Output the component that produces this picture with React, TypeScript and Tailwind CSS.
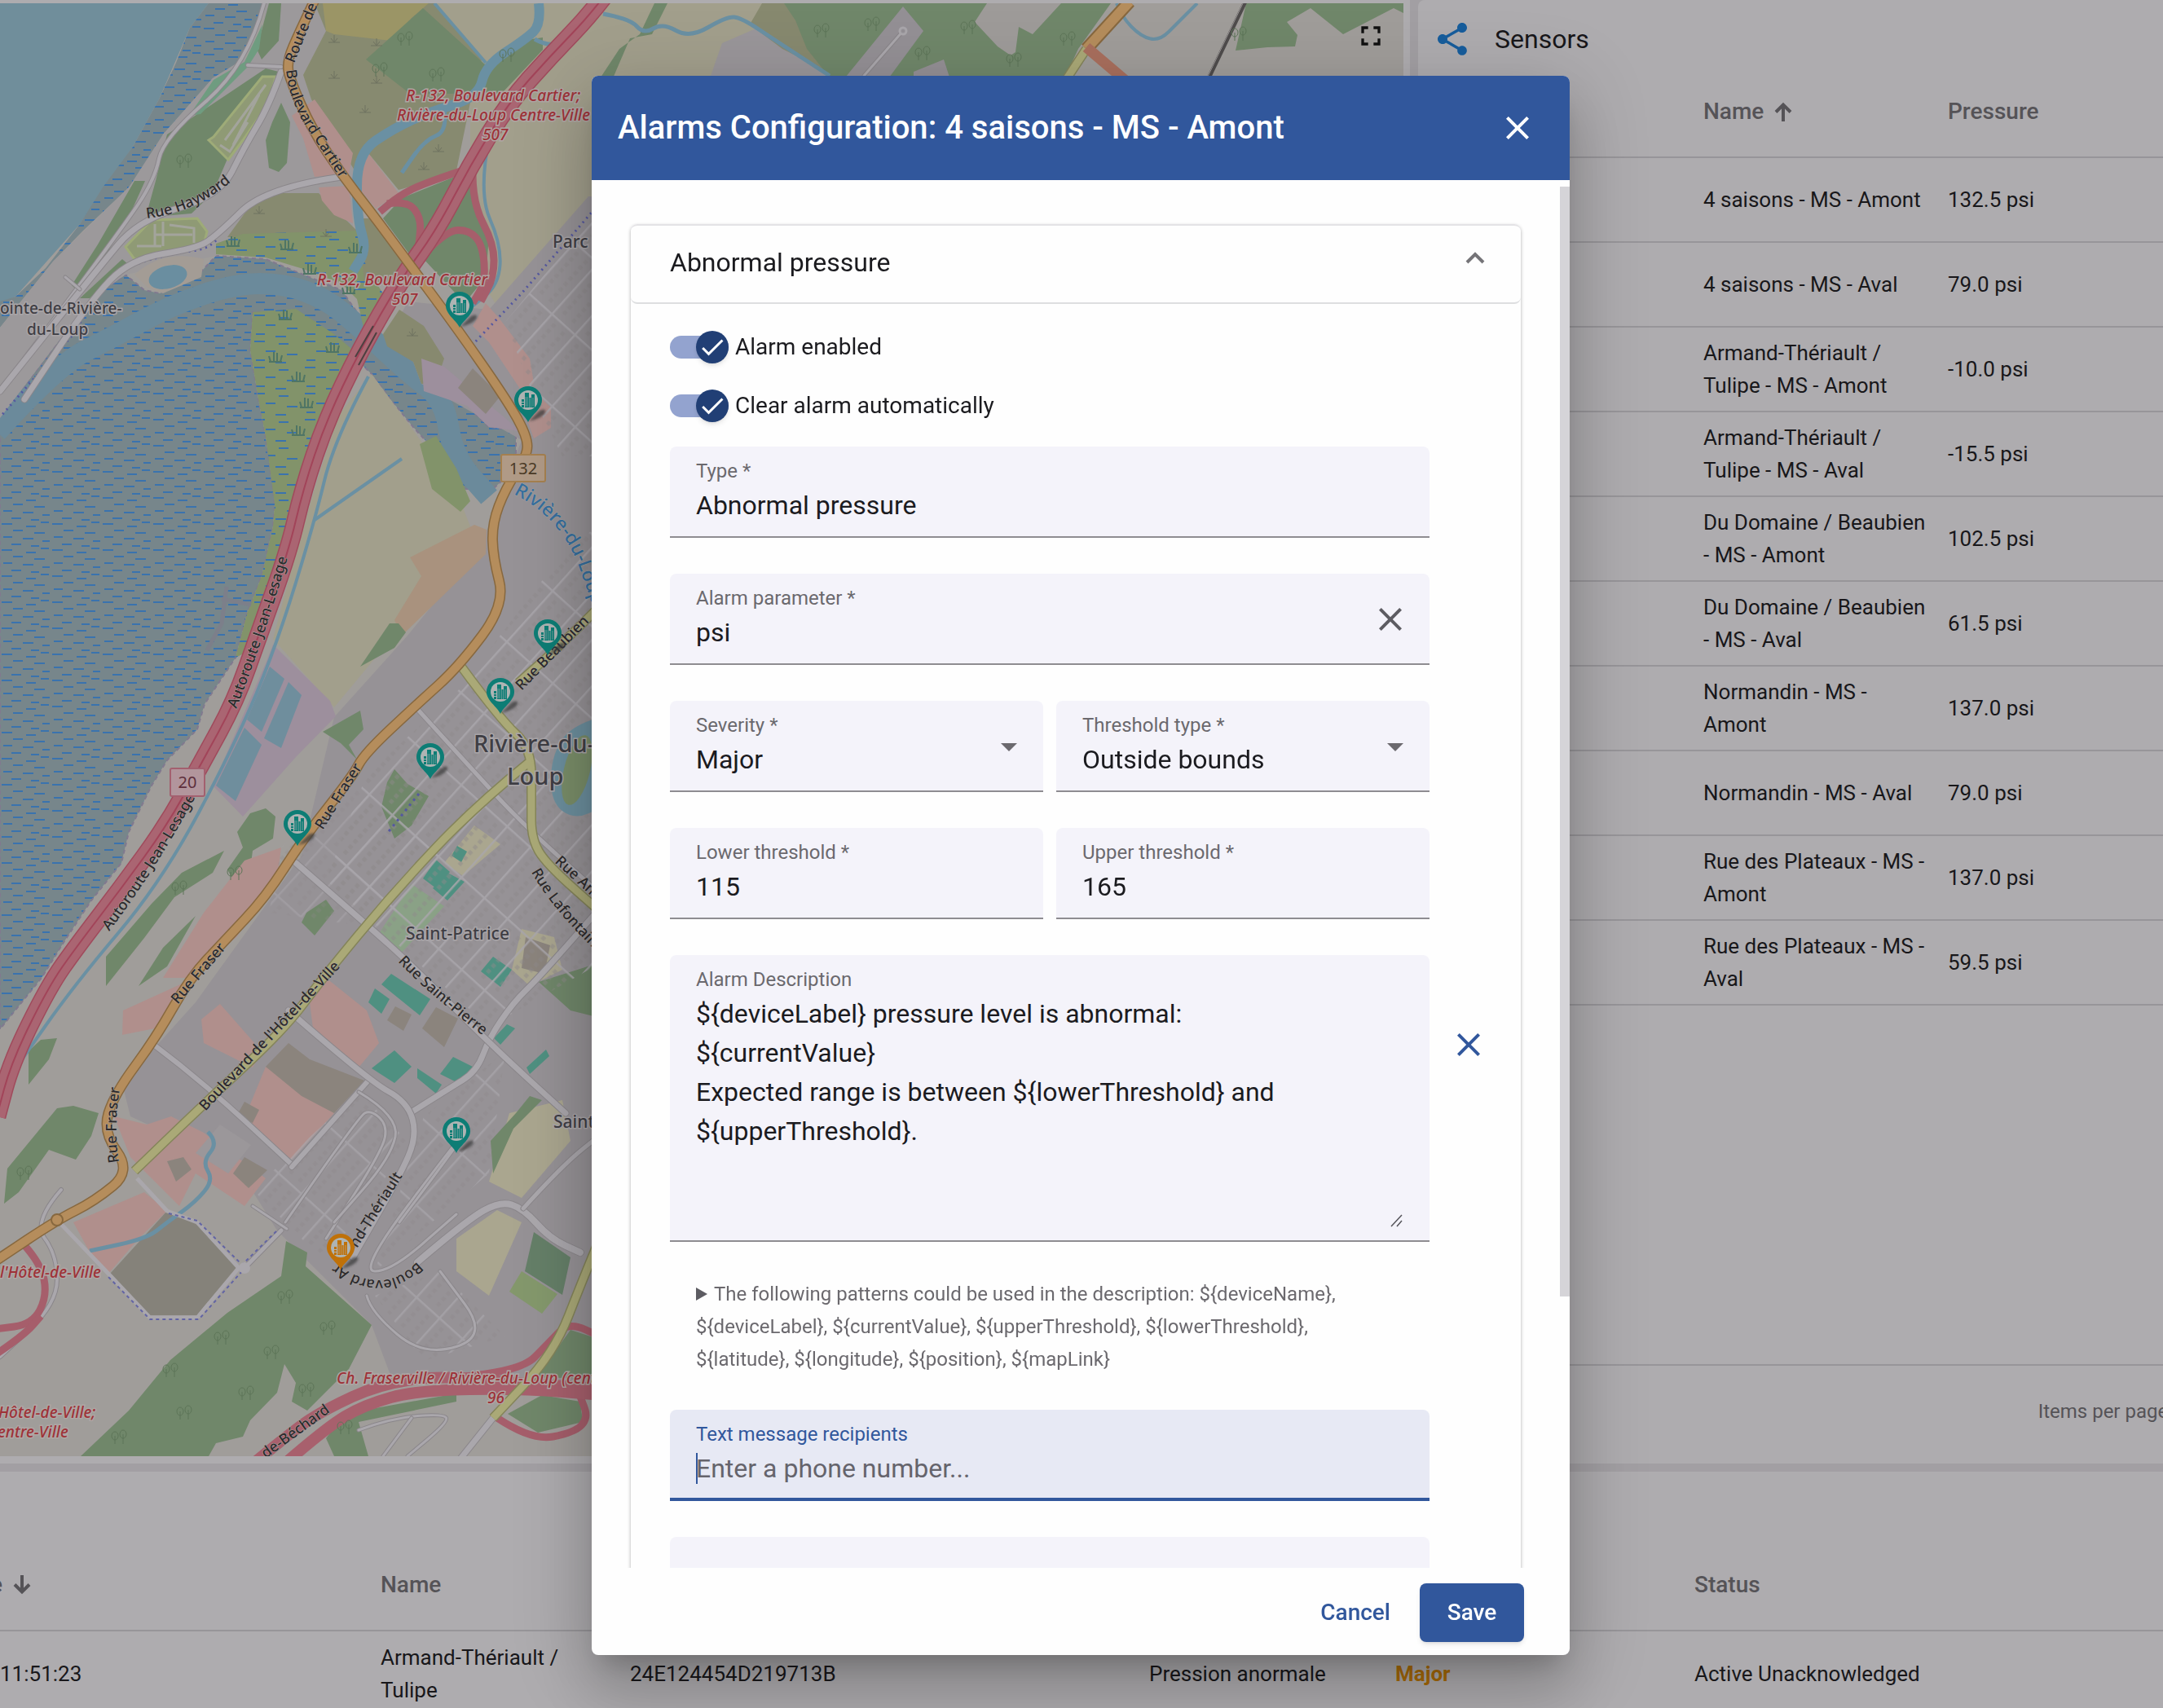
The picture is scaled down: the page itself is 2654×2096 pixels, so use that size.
import React from "react";

type Pt = [number, number];

const poly = (pts: Pt[]) => pts.map((p) => p.join(",")).join(" ");

/* Smooth polyline through the midpoints of its segments. */
function curve(pts: Pt[]): string {
  let d = `M${pts[0][0]} ${pts[0][1]}`;
  for (let i = 1; i < pts.length - 1; i++) {
    const mx = (pts[i][0] + pts[i + 1][0]) / 2;
    const my = (pts[i][1] + pts[i + 1][1]) / 2;
    d += ` Q${pts[i][0]} ${pts[i][1]} ${mx} ${my}`;
  }
  const last = pts[pts.length - 1];
  return d + ` L${last[0]} ${last[1]}`;
}

const FOREST = "#70876a";
const COMMERCIAL = "#b08f8c";
const BUILDING = "#8b847d";
const FARM = "#a29f8c";

const flatsNorth: Pt[] = [[256, 4], [233, 34], [216, 77], [195, 122], [163, 180], [126, 230], [98, 275], [56, 329], [19, 364], [0, 370], [0, 402], [28, 367], [65, 321], [102, 283], [158, 230], [186, 199], [200, 165], [261, 96], [298, 73], [307, 50], [326, 4]];
const bay: Pt[] = [[0, 513], [70, 421], [93, 383], [121, 360], [154, 337], [177, 356], [196, 360], [233, 344], [247, 333], [265, 314], [326, 318], [372, 337], [419, 356], [438, 383], [447, 406], [475, 425], [507, 444], [517, 471], [540, 482], [573, 498], [600, 524], [633, 528], [633, 574], [605, 600], [559, 600], [535, 555], [507, 524], [479, 490], [456, 459], [428, 432], [386, 402], [335, 383], [310, 383], [307, 429], [317, 490], [326, 536], [335, 600], [337, 619], [335, 646], [321, 707], [303, 753], [289, 807], [251, 864], [242, 895], [205, 933], [186, 964], [158, 1021], [149, 1059], [112, 1105], [79, 1155], [51, 1200], [0, 1263]];

const areas: { fill: string; pts: Pt[] }[] = [
  { fill: "#a29f8c", pts: [[520, 4], [960, 4], [972, 53], [1031, 93], [1031, 241], [722, 241], [619, 390], [600, 360], [577, 237], [577, 126], [591, 73]] },
  { fill: "#969296", pts: [[722, 241], [1000, 241], [1000, 1700], [480, 1690], [456, 1626], [340, 1510], [290, 1430], [160, 1370], [150, 1330], [240, 1230], [370, 1050], [410, 880], [500, 780], [590, 670], [640, 540], [517, 471], [507, 444], [475, 420], [500, 370], [600, 380]] },
  { fill: "#9c999b", pts: [[200, 165], [261, 96], [320, 60], [326, 4], [386, 4], [400, 38], [372, 92], [382, 122], [433, 200], [433, 283], [326, 245], [265, 314], [154, 337], [121, 360], [70, 421], [0, 513], [0, 402], [65, 321], [158, 230]] },
  { fill: "#878a70", pts: [[386, 4], [535, 4], [591, 73], [577, 126], [559, 214], [489, 233], [452, 188], [438, 214], [382, 122], [372, 92], [400, 38]] },
  { fill: "#9b9566", pts: [[396, 4], [526, 4], [505, 22], [480, 50], [410, 42], [400, 38]] },
  { fill: "#878a70", pts: [[326, 237], [391, 237], [438, 283], [400, 298], [279, 291], [300, 262]] },
  { fill: "#82936a", pts: [[265, 299], [298, 287], [438, 283], [450, 330], [470, 360], [447, 406], [438, 367], [419, 348], [372, 330], [326, 316], [265, 312]] },
  { fill: "#82936a", pts: [[310, 383], [363, 379], [410, 410], [436, 432], [428, 448], [372, 574], [361, 640], [340, 720], [303, 800], [289, 807], [303, 753], [321, 707], [335, 646], [337, 619], [326, 536], [317, 490], [307, 429]] },
  { fill: "#87896f", pts: [[490, 380], [520, 400], [545, 440], [535, 470], [517, 471], [507, 444], [475, 425], [470, 410]] },
  { fill: "#87896f", pts: [[438, 268], [461, 268], [520, 350], [500, 350], [447, 344]] },
  { fill: FOREST, pts: [[519, 10], [596, 80], [587, 115], [503, 115], [449, 73]] },
  { fill: FOREST, pts: [[600, 77], [652, 48], [666, 46], [666, 61], [619, 111], [587, 126]] },
  { fill: FOREST, pts: [[493, 243], [560, 216], [535, 283], [512, 325], [470, 268]] },
  { fill: FOREST, pts: [[577, 222], [600, 290], [596, 340], [570, 372], [520, 318], [545, 280]] },
  { fill: FOREST, pts: [[330, 4], [345, 4], [342, 50], [321, 73], [315, 60]] },
  { fill: FOREST, pts: [[326, 84], [342, 88], [340, 111], [298, 161], [279, 195], [261, 237], [235, 262], [200, 265], [180, 262], [191, 222], [200, 184], [205, 165]] },
  { fill: FOREST, pts: [[345, 126], [356, 150], [352, 200], [342, 211], [330, 206], [326, 172], [334, 150]] },
  { fill: FOREST, pts: [[165, 222], [178, 222], [160, 262], [120, 330], [96, 358], [88, 350], [120, 300]] },
  { fill: FOREST, pts: [[150, 318], [158, 325], [110, 366], [98, 366]] },
  { fill: "#6f9c80", pts: [[322, 30], [318, 60], [304, 82], [246, 140], [232, 142], [262, 98], [300, 76]] },
  { fill: COMMERCIAL, pts: [[358, 142], [386, 122], [433, 188], [428, 214], [386, 217], [372, 170]] },
  { fill: COMMERCIAL, pts: [[452, 188], [489, 237], [461, 256], [440, 230], [440, 205]] },
  { fill: COMMERCIAL, pts: [[391, 230], [428, 228], [433, 274], [410, 264], [395, 246]] },
  { fill: COMMERCIAL, pts: [[596, 372], [612, 390], [650, 440], [655, 470], [640, 480], [600, 420], [580, 400]] },
  { fill: COMMERCIAL, pts: [[655, 480], [676, 500], [676, 525], [655, 538], [645, 510]] },
  { fill: FARM, pts: [[456, 459], [507, 528], [559, 600], [577, 646], [521, 703], [489, 772], [450, 820], [410, 868], [335, 784], [360, 690], [386, 600], [415, 510]] },
  { fill: "#82936a", pts: [[535, 535], [560, 575], [577, 615], [565, 628], [530, 600], [515, 545]] },
  { fill: "#a9927e", pts: [[582, 644], [597, 650], [596, 680], [493, 780], [484, 761], [517, 707], [503, 684]] },
  { fill: "#9d8f9d", pts: [[335, 791], [405, 860], [412, 879], [363, 929], [298, 1002], [261, 964], [326, 814]] },
  { fill: "#9d8f9d", pts: [[517, 440], [545, 450], [640, 530], [630, 528], [600, 524], [573, 498], [520, 480]] },
  { fill: BUILDING, pts: [[580, 452], [614, 486], [596, 508], [562, 476]] },
  { fill: "#6f8e9d", pts: [[331, 818], [349, 833], [321, 898], [303, 883]] },
  { fill: "#6f8e9d", pts: [[354, 837], [370, 853], [345, 918], [324, 906]] },
  { fill: "#6f8e9d", pts: [[300, 893], [321, 914], [289, 983], [265, 964]] },
  { fill: FOREST, pts: [[489, 765], [478, 765], [442, 818], [484, 795], [498, 776]] },
  { fill: FOREST, pts: [[442, 872], [446, 895], [428, 914], [438, 932], [418, 912], [396, 898]] },
  { fill: FOREST, pts: [[326, 992], [338, 1002], [335, 1029], [310, 1044], [307, 1067], [289, 1086], [279, 1067], [298, 1040], [291, 1021], [307, 998]] },
  { fill: FOREST, pts: [[275, 1044], [261, 1071], [214, 1101], [177, 1151], [130, 1210], [130, 1174], [186, 1109], [223, 1071]] },
  { fill: FOREST, pts: [[240, 1124], [205, 1186], [170, 1210], [200, 1163]] },
  { fill: FOREST, pts: [[484, 944], [500, 962], [526, 977], [505, 1013], [484, 1029], [468, 990], [475, 960]] },
  { fill: FOREST, pts: [[376, 1120], [400, 1104], [410, 1118], [386, 1148], [370, 1132]] },
  { fill: "#8aa186", pts: [[505, 1085], [545, 1112], [490, 1172], [462, 1150]] },
  { fill: "#aaa68f", pts: [[582, 1013], [614, 1036], [568, 1075], [545, 1059]] },
  { fill: "#aaa68f", pts: [[640, 1140], [680, 1150], [690, 1190], [650, 1210], [628, 1190]] },
  { fill: BUILDING, pts: [[645, 1150], [675, 1160], [668, 1195], [640, 1188]] },
  { fill: COMMERCIAL, pts: [[300, 1056], [345, 1040], [340, 1080], [290, 1150], [230, 1200], [200, 1200], [250, 1120]] },
  { fill: COMMERCIAL, pts: [[151, 1240], [230, 1204], [200, 1260], [150, 1270]] },
  { fill: COMMERCIAL, pts: [[247, 1251], [270, 1232], [321, 1290], [310, 1310], [250, 1280]] },
  { fill: COMMERCIAL, pts: [[326, 1309], [410, 1366], [358, 1423], [298, 1377]] },
  { fill: COMMERCIAL, pts: [[400, 1200], [450, 1240], [465, 1280], [440, 1310], [385, 1270], [380, 1230]] },
  { fill: COMMERCIAL, pts: [[140, 1370], [180, 1380], [210, 1370], [250, 1390], [326, 1446], [300, 1480], [240, 1440], [220, 1480], [160, 1420]] },
  { fill: COMMERCIAL, pts: [[90, 1500], [177, 1463], [205, 1486], [170, 1520], [133, 1563], [112, 1540]] },
  { fill: BUILDING, pts: [[354, 1280], [380, 1300], [447, 1326], [410, 1366], [370, 1345], [326, 1309]] },
  { fill: BUILDING, pts: [[300, 1352], [318, 1362], [310, 1378], [290, 1370]] },
  { fill: BUILDING, pts: [[205, 1425], [225, 1420], [235, 1435], [216, 1450]] },
  { fill: BUILDING, pts: [[300, 1420], [328, 1436], [305, 1458], [286, 1440]] },
  { fill: "#9b979a", pts: [[270, 1380], [308, 1405], [280, 1440], [240, 1415]] },
  { fill: BUILDING, pts: [[535, 1236], [562, 1250], [545, 1285], [518, 1262]] },
  { fill: BUILDING, pts: [[485, 1235], [505, 1245], [495, 1265], [475, 1252]] },
  { fill: "#aaa68f", pts: [[625, 1366], [690, 1350], [700, 1400], [640, 1470], [600, 1450]] },
  { fill: "#aaa68f", pts: [[560, 1520], [610, 1485], [640, 1500], [600, 1590], [560, 1560]] },
  { fill: FOREST, pts: [[633, 1366], [650, 1345], [665, 1350], [630, 1385], [605, 1440], [602, 1400]] },
  { fill: FOREST, pts: [[661, 1205], [740, 1180], [740, 1250], [700, 1240]] },
  { fill: "#657f68", pts: [[655, 1512], [700, 1543], [690, 1589], [644, 1560]] },
  { fill: "#84986c", pts: [[640, 1560], [684, 1588], [665, 1612], [625, 1585]] },
  { fill: "#85827a", pts: [[205, 1486], [242, 1500], [291, 1554], [242, 1614], [184, 1614], [135, 1563]] },
  { fill: FOREST, pts: [[351, 1523], [377, 1537], [375, 1554], [456, 1626], [428, 1680], [377, 1731], [358, 1720], [363, 1697], [349, 1674], [340, 1709], [307, 1743], [298, 1763], [265, 1771], [256, 1787], [99, 1787], [158, 1731], [209, 1669], [279, 1611], [345, 1566]] },
  { fill: FOREST, pts: [[70, 1360], [90, 1357], [121, 1366], [112, 1394], [93, 1423], [60, 1411], [23, 1463], [5, 1477], [9, 1434]] },
  { fill: FOREST, pts: [[70, 1274], [60, 1300], [35, 1331], [35, 1290], [50, 1276]] },
  { fill: FOREST, pts: [[415, 1745], [450, 1730], [560, 1710], [560, 1720], [440, 1745], [452, 1787], [410, 1787], [400, 1765]] },
  { fill: FOREST, pts: [[623, 1735], [665, 1712], [712, 1720], [715, 1745], [660, 1758]] },
  { fill: FOREST, pts: [[700, 1632], [740, 1645], [740, 1692], [650, 1690], [680, 1660]] },
  { fill: "#4f9081", pts: [[535, 1055], [552, 1070], [535, 1090], [519, 1078]] },
  { fill: "#4f9081", pts: [[549, 1071], [570, 1082], [549, 1105], [531, 1090]] },
  { fill: "#4f9081", pts: [[561, 1038], [573, 1045], [566, 1058], [554, 1050]] },
  { fill: "#4f9081", pts: [[480, 1195], [528, 1226], [515, 1246], [468, 1208]] },
  { fill: "#4f9081", pts: [[460, 1213], [478, 1226], [468, 1244], [452, 1230]] },
  { fill: "#4f9081", pts: [[605, 1174], [628, 1190], [614, 1211], [590, 1192]] },
  { fill: "#4f9081", pts: [[484, 1289], [505, 1309], [484, 1329], [456, 1311]] },
  { fill: "#4f9081", pts: [[512, 1311], [542, 1331], [535, 1342], [512, 1323]] },
  { fill: "#4f9081", pts: [[556, 1297], [580, 1309], [566, 1331], [540, 1318]] },
  { fill: "#4f9081", pts: [[622, 1257], [632, 1262], [614, 1282], [606, 1274]] },
  { fill: "#4f9081", pts: [[670, 1288], [674, 1296], [650, 1318], [646, 1310]] },
  { fill: FOREST, pts: [[959, 4], [1363, 4], [1323, 60], [1300, 110], [1031, 110], [1018, 93], [972, 60]] },
  { fill: "#9a969a", pts: [[932, 33], [1018, 93], [1018, 110], [866, 110], [886, 53]] },
  { fill: "#87896f", pts: [[935, 4], [962, 4], [976, 25], [990, 60], [1010, 85], [960, 60], [920, 30]] },
  { fill: FOREST, pts: [[803, 4], [819, 4], [800, 42], [773, 47], [746, 110], [727, 110], [760, 60], [785, 42]] },
  { fill: "#949095", pts: [[1108, 8], [1133, 38], [1080, 110], [1025, 110]] },
  { fill: "#9e9b99", pts: [[1211, 4], [1302, 4], [1267, 42], [1250, 33], [1246, 64], [1240, 68], [1224, 57], [1196, 27]] },
  { fill: "#949095", pts: [[1121, 88], [1158, 73], [1170, 110], [1121, 110]] },
  { fill: FOREST, pts: [[1529, 4], [1722, 4], [1722, 16], [1710, 10], [1648, 42], [1608, 10], [1579, 27], [1592, 43], [1589, 57], [1555, 58], [1516, 62]] },
];

const streams: { w: number; pts: Pt[] }[] = [
  { w: 12, pts: [[661, 4], [664, 30], [645, 48], [596, 80], [587, 119], [526, 138], [484, 157], [438, 188], [438, 268], [450, 306], [433, 333]] },
  { w: 4, pts: [[533, 4], [596, 77]] },
  { w: 5, pts: [[545, 134], [549, 161], [521, 172], [493, 212]] },
  { w: 5, pts: [[656, 48], [680, 62], [720, 30]] },
  { w: 4, pts: [[600, 170], [587, 237], [615, 300], [612, 350], [577, 378]] },
  { w: 4, pts: [[452, 462], [410, 540], [386, 640], [340, 790], [290, 910], [200, 1080], [90, 1210], [20, 1310]] },
  { w: 4, pts: [[493, 563], [440, 600], [386, 638]] },
  { w: 5, pts: [[255, 1389], [268, 1402], [248, 1426], [262, 1448], [240, 1475], [205, 1500], [180, 1520], [110, 1535]] },
  { w: 5, pts: [[740, 17], [773, 23], [790, 42], [813, 28], [846, 47], [892, 20], [910, 22], [952, 50], [1018, 93]] },
  { w: 4, pts: [[1370, 4], [1376, 20], [1400, 45], [1423, 50], [1445, 28], [1469, 4]] },
];

const minorRoads: { w: number; pts: Pt[] }[] = [
  { w: 7, pts: [[503, 1366], [549, 1337], [585, 1315], [600, 1274], [630, 1230], [661, 1200], [740, 1110]] },
  { w: 6, pts: [[186, 1280], [247, 1326], [358, 1429]] },
  { w: 6, pts: [[358, 1432], [452, 1326]] },
  { w: 7, pts: [[354, 1240], [452, 1326], [500, 1352], [512, 1394], [489, 1446], [433, 1543]] },
  { w: 8, pts: [[512, 1549], [573, 1497], [614, 1474], [642, 1483], [675, 1520], [712, 1537]] },
  { w: 7, pts: [[363, 1059], [447, 1132], [507, 1186], [600, 1280], [694, 1366]] },
  { w: 5, pts: [[642, 1483], [690, 1430], [740, 1390]] },
  { w: 5, pts: [[512, 870], [580, 945], [640, 1010], [740, 1100]] },
  { w: 4, pts: [[324, 4], [304, 80], [200, 170], [190, 220], [150, 280], [0, 480]] },
  { w: 7, pts: [[345, 88], [330, 130], [300, 180], [270, 240], [170, 270], [120, 330], [0, 480]] },
  { w: 7, pts: [[419, 217], [326, 230], [265, 290], [240, 305], [160, 318], [110, 370], [30, 490]] },
  { w: 4, pts: [[304, 80], [345, 82]] },
  { w: 3, pts: [[80, 340], [98, 355]] },
  { w: 5, pts: [[300, 1556], [345, 1510]] },
  { w: 3, pts: [[350, 1500], [440, 1370], [455, 1362], [475, 1380], [470, 1410], [400, 1520]] },
  { w: 3, pts: [[440, 1340], [490, 1370], [480, 1420], [410, 1500]] },
  { w: 3, pts: [[310, 1480], [352, 1508]] },
  { w: 3, pts: [[490, 1500], [580, 1380], [560, 1400], [440, 1560], [480, 1560], [560, 1490]] },
  { w: 3, pts: [[450, 1590], [455, 1610], [520, 1665], [600, 1640], [540, 1560]] },
  { w: 3, pts: [[440, 1755], [480, 1740], [545, 1735], [550, 1745], [500, 1787]] },
  { w: 3, pts: [[470, 1787], [505, 1740]] },
  { w: 3, pts: [[1108, 38], [1060, 93]] },
  { w: 7, pts: [[605, 1740], [565, 1790]] },
  { w: 4, pts: [[75, 1460], [40, 1500], [70, 1540], [70, 1600], [0, 1665]] },
];

const motorway: Pt[] = [[760, -30], [730, 12], [675, 69], [624, 126], [577, 203], [535, 283], [493, 341], [442, 429], [400, 517], [372, 600], [354, 677], [317, 780], [289, 860], [247, 937], [205, 1013], [149, 1090], [93, 1163], [60, 1210], [14, 1303], [-4, 1370]];
const ramps: Pt[][] = [
  [[565, 210], [520, 225], [490, 240], [466, 260]],
  [[475, 250], [500, 246], [517, 268], [514, 300]],
  [[580, 214], [580, 250], [606, 299], [606, 340], [590, 370]],
  [[522, 310], [548, 283], [575, 282], [592, 300], [596, 345], [580, 372]],
  [[28, 1526], [50, 1550], [58, 1590], [40, 1625], [-5, 1631]],
  [[-5, 1662], [30, 1638], [50, 1615]],
  [[610, 1740], [652, 1768], [705, 1758], [722, 1740], [712, 1714]],
  [[560, 1690], [638, 1684], [675, 1646], [698, 1622], [740, 1642]],
];
const bypass: Pt[][] = [
  [[300, 1805], [360, 1755], [400, 1729], [465, 1699], [540, 1688], [628, 1697], [740, 1704]],
  [[345, 1800], [400, 1752], [447, 1724], [512, 1706], [640, 1704], [740, 1712]],
];
const primary: Pt[] = [[388, -4], [368, 38], [351, 77], [358, 103], [382, 157], [419, 214], [461, 268], [503, 325], [563, 406], [624, 494], [647, 536], [647, 559], [620, 600], [604, 642], [605, 684], [620, 742], [563, 818], [512, 864], [447, 925], [433, 952], [372, 1029], [326, 1101], [275, 1155], [233, 1200], [191, 1274], [140, 1343], [126, 1389], [161, 1437], [116, 1474], [70, 1497], [-5, 1547]];
const secondary: Pt[][] = [
  [[740, 740], [690, 790], [636, 838]],
  [[566, 818], [614, 883], [652, 918], [652, 983], [652, 1029], [670, 1060], [740, 1122]],
  [[652, 933], [582, 990], [484, 1094], [396, 1200], [349, 1263], [251, 1354], [165, 1437]],
  [[740, 1510], [715, 1570], [680, 1660], [605, 1740]],
  [[1333, 60], [1300, 110]],
];

const curvedLabels: { id: string; d: string; text: string; fill?: string; size?: number }[] = [
  { id: "route", d: "M361 78 L372 50 L398 -14", text: "Route de la" },
  { id: "cartier", d: "M351 86 Q354 118 372 150 L430 238", text: "Boulevard Cartier" },
  { id: "hayward", d: "M180 268 Q240 262 292 216", text: "Rue Hayward" },
  { id: "jl1", d: "M290 870 Q322 790 358 668", text: "Autoroute Jean-Lesage" },
  { id: "jl2", d: "M134 1143 Q190 1070 250 960", text: "Autoroute Jean-Lesage" },
  { id: "riv", d: "M630 606 Q690 636 712 700 L740 780", text: "Rivière-du-Loup", fill: "#356f9f", size: 23 },
  { id: "fr1", d: "M396 1019 L448 936", text: "Rue Fraser" },
  { id: "fr2", d: "M218 1233 L284 1156", text: "Rue Fraser" },
  { id: "fr3", d: "M146 1426 Q138 1380 150 1318", text: "Rue Fraser" },
  { id: "hotel", d: "M252 1364 L424 1180", text: "Boulevard de l'Hôtel-de-Ville" },
  { id: "beau", d: "M640 848 L730 756", text: "Rue Beaubien" },
  { id: "pierre", d: "M488 1180 Q530 1224 610 1284", text: "Rue Saint-Pierre" },
  { id: "amy", d: "M680 1058 L780 1150", text: "Rue Amyot" },
  { id: "laf", d: "M652 1070 Q680 1122 760 1194", text: "Rue Lafontaine" },
  { id: "ther", d: "M438 1532 L506 1424", text: "nd-Thériault" },
  { id: "bd", d: "M512 1548 Q470 1592 415 1552", text: "Boulevard Ar" },
  { id: "bech", d: "M326 1790 L420 1722", text: "de-Béchard" },
];

const redLabels: { x: number; y: number; text: string }[] = [
  { x: 498, y: 124, text: "R-132, Boulevard Cartier;" },
  { x: 487, y: 148, text: "Rivière-du-Loup Centre-Ville" },
  { x: 592, y: 172, text: "507" },
  { x: 389, y: 350, text: "R-132, Boulevard Cartier" },
  { x: 481, y: 374, text: "507" },
  { x: 0, y: 1568, text: "l'Hôtel-de-Ville" },
  { x: -2, y: 1740, text: "Hôtel-de-Ville;" },
  { x: -3, y: 1764, text: "entre-Ville" },
  { x: 413, y: 1698, text: "Ch. Fraserville / Rivière-du-Loup (centre)" },
  { x: 598, y: 1722, text: "96" },
];

const pins: { x: number; y: number; color: string }[] = [
  { x: 564, y: 402, color: "#0d7d75" },
  { x: 648, y: 518, color: "#0d7d75" },
  { x: 672, y: 804, color: "#0d7d75" },
  { x: 614, y: 876, color: "#0d7d75" },
  { x: 528, y: 956, color: "#0d7d75" },
  { x: 365, y: 1038, color: "#0d7d75" },
  { x: 560, y: 1415, color: "#0d7d75" },
  { x: 418, y: 1558, color: "#bf7109" },
];

const trees: Pt[] = [[497, 48], [466, 86], [536, 92], [622, 68], [226, 198], [350, 1592], [272, 1642], [333, 1660], [402, 1630], [209, 1682], [302, 1710], [226, 1734], [146, 1764], [376, 1706], [423, 1752], [220, 1090], [288, 1072], [30, 1440], [1008, 38], [1070, 30], [1132, 66], [1188, 34], [1244, 74], [1310, 48], [1520, 42]];
const shrubs: Pt[] = [[410, 96], [462, 102], [448, 138], [538, 186], [520, 208], [318, 262], [400, 290], [506, 412], [410, 52], [462, 56]];
const reeds: Pt[] = [[286, 302], [352, 306], [428, 360], [350, 392], [338, 444], [408, 432], [366, 468], [376, 500], [366, 534], [380, 336], [436, 310]];

function Pin({ x, y, color }: { x: number; y: number; color: string }) {
  return (
    <g transform={`translate(${x} ${y})`}>
      <path d="M1 -1 L14 -14 Q22 -18 21 -12 Q18 -5 1 -1Z" fill="#3c3c3e" opacity="0.75" filter="url(#soft)" />
      <path d="M0 0 C-4 -9 -17 -16 -17 -27 A17 17 0 1 1 17 -27 C17 -16 4 -9 0 0Z" fill={color} />
      <circle cx="0" cy="-27" r="12" fill="#aeb4b3" />
      <g fill={color}>
        <path d="M-4 -36h5v18h-5z M4 -34h4v16H4z M-8 -28h3v3h-3z M-8 -24h3v2h-3z M-8 -21h3v3h-3z M1.500 -30h2v12h-2z" />
      </g>
      <path d="M-3 -31v12M-1 -31v12M6 -30v11" stroke="#aeb4b3" strokeWidth="0.6" />
    </g>
  );
}

function CityMap() {
  const d = curve(motorway);
  return (
    <svg viewBox="0 4 1722 1783" className="block h-auto w-full" role="img" aria-label="Map of Rivière-du-Loup">
      <defs>
        <pattern id="tidal" width="62" height="32" patternUnits="userSpaceOnUse">
          <rect width="62" height="32" fill="#77868b" />
          <path d="M2 3h13M32 6h12M50 1h10M16 11h12M42 14h13M4 19h11M28 21h13M52 24h9M14 28h12M38 30h10" stroke="#3a73ae" strokeWidth="2" />
        </pattern>
        <pattern id="marsh" width="62" height="32" patternUnits="userSpaceOnUse">
          <path d="M2 3h13M32 6h12M16 15h12M42 19h13M4 26h11M28 29h13" stroke="#3a73ae" strokeWidth="2" />
        </pattern>
        <pattern id="streets" width="38" height="84" patternUnits="userSpaceOnUse" patternTransform="rotate(42)">
          <path d="M0 1h38M1 0v84" stroke="#a9a6ab" strokeWidth="3" fill="none" />
          <path d="M12 8v70M27 8v70" stroke="#8d888a" strokeWidth="5" strokeDasharray="5 4" opacity="0.55" />
        </pattern>
        <filter id="soft">
          <feGaussianBlur stdDeviation="1.500" />
        </filter>
      </defs>

      <rect x="0" y="0" width="1722" height="1790" fill="#a09d9a" />
      <polygon points={poly([[0, 4], [256, 4], [233, 34], [195, 122], [163, 180], [98, 275], [19, 364], [0, 372]])} fill="#708e9b" />
      <polygon points={poly(flatsNorth)} fill="url(#tidal)" />
      <polygon points={poly(bay)} fill="url(#tidal)" stroke="#81798f" strokeWidth="2" strokeDasharray="5 4" />
      <path d={curve([[-4, 530], [70, 448], [140, 413], [209, 375], [289, 348], [349, 348], [400, 367], [438, 398], [503, 459], [545, 490], [556, 560], [600, 610]])} stroke="#6b8a9b" strokeWidth="26" fill="none" />

      {areas.map((a, i) => (
        <polygon key={i} points={poly(a.pts)} fill={a.fill} />
      ))}
      <polygon points={poly(areas[6].pts)} fill="url(#marsh)" />
      <polygon points={poly(areas[7].pts)} fill="url(#marsh)" />
      <polygon points={poly([[560, 850], [690, 680], [740, 640], [740, 1180], [600, 1260], [400, 1080], [450, 950]])} fill="url(#streets)" opacity="0.85" />
      <polygon points={poly([[620, 395], [740, 250], [740, 560], [690, 560], [660, 500]])} fill="url(#streets)" opacity="0.85" />
      <polygon points={poly([[310, 1460], [440, 1340], [500, 1400], [440, 1500], [390, 1540]])} fill="url(#streets)" opacity="0.7" />
      <polygon points={poly([[520, 1370], [620, 1290], [600, 1440], [460, 1560]])} fill="url(#streets)" opacity="0.7" />
      <polygon points={poly([[460, 1590], [540, 1560], [620, 1640], [520, 1670]])} fill="url(#streets)" opacity="0.7" />
      <polygon points={poly([[345, 1040], [430, 960], [540, 1050], [470, 1140], [330, 1120]])} fill="url(#streets)" opacity="0.5" />

      <path d="M262 168 L322 94 L338 94 L330 126 L298 172 L280 196 L256 172 Z" fill="#8f9a75" stroke="#9eab78" strokeWidth="3" />
      <path d="M276 172 L326 104 M286 178 L318 116 M270 178 L282 186 L304 150" stroke="#a3a49c" strokeWidth="3" fill="none" />
      <path d="M186 270 L242 268 L254 284 L250 300 L165 318 L154 303 Z" fill="#8f9a75" stroke="#9eab78" strokeWidth="3" />
      <path d="M190 275v28M200 272v30M190 288h46M168 302h30M208 276l30 4v18" stroke="#a3a49c" strokeWidth="3" fill="none" />
      <path d="M165 337 Q200 305 250 318 L247 340 L200 360 L180 352 Z" fill="#a39c95" />
      <ellipse cx="206" cy="340" rx="24" ry="14" fill="#6a8ea0" transform="rotate(-15 206 340)" />
      <path d={curve([[737, 880], [700, 890], [676, 930], [676, 985], [705, 1006], [740, 990]])} fill="#6c8f9e" />
      <ellipse cx="708" cy="945" rx="16" ry="44" fill="#7a8e69" transform="rotate(14 708 945)" />
      <path d="M278 720 L272 765 L254 798 M272 735 L308 742" stroke="#7c7f8a" strokeWidth="5" fill="none" />

      <path d="M265 295 Q255 306 235 308 Q180 316 150 332 Q115 365 90 410 L0 512" stroke="#5558a0" strokeWidth="3" strokeDasharray="2 5" fill="none" />
      <path d="M730 256 L640 360 L575 428" stroke="#5558a0" strokeWidth="3" strokeDasharray="2 5" fill="none" />
      <path d="M514 974 L474 1024" stroke="#5558a0" strokeWidth="3" strokeDasharray="3 5" fill="none" />

      {streams.map((s, i) => (
        <path key={i} d={curve(s.pts)} stroke="#6a90a3" strokeWidth={s.w} fill="none" strokeLinejoin="round" />
      ))}

      {minorRoads.map((r, i) => (
        <g key={i} fill="none" strokeLinejoin="round" strokeLinecap="round">
          <path d={curve(r.pts)} stroke="#8a868a" strokeWidth={r.w + 2} />
          <path d={curve(r.pts)} stroke="#aaa7ac" strokeWidth={r.w} />
        </g>
      ))}
      <path d="M70 1497 L133 1563 L184 1617 L242 1617 L293 1556 L242 1500 L205 1486 L168 1446" stroke="#aaa7ac" strokeWidth="5" strokeLinejoin="round" fill="none" />
      <path d="M207 1489 L242 1498 L297 1552 L340 1510 M297 1560 L244 1619 L184 1619 L132 1566" stroke="#6264a4" strokeWidth="2" strokeDasharray="4 4" fill="none" />

      <g fill="none" strokeLinecap="butt" strokeLinejoin="round">
        {ramps.map((r, i) => (
          <path key={i} d={curve(r)} stroke="#a65e6b" strokeWidth="9" />
        ))}
        {bypass.map((r, i) => (
          <path key={i} d={curve(r)} stroke="#a8606d" strokeWidth="14" />
        ))}
        <path d={d} stroke="#a04a5c" strokeWidth="23" />
        <path d={d} stroke="#aa6572" strokeWidth="20" />
        <path d={d} stroke="#a24459" strokeWidth="2" />
        {secondary.map((r, i) => (
          <path key={i} d={curve(r)} stroke="#84845a" strokeWidth="12" />
        ))}
        {secondary.map((r, i) => (
          <path key={i} d={curve(r)} stroke="#aaa977" strokeWidth="9" />
        ))}
        <path d={curve(primary)} stroke="#87683f" strokeWidth="13" />
        <path d={curve(primary)} stroke="#b58d5c" strokeWidth="10" />
        <path d="M1386 2 L1333 60" stroke="#87683f" strokeWidth="16" />
        <path d="M1386 2 L1333 60" stroke="#b58d5c" strokeWidth="12" />
        <path d="M1333 58 L1380 98" stroke="#a96f5d" strokeWidth="13" />
        <path d="M1528 2 L1505 50 L1482 98" stroke="#4f4c4c" strokeWidth="5" />
        <path d="M1526 2 L1503 50 L1480 98" stroke="#9a9696" strokeWidth="1" />
        <path d="M436 438 L458 400 M440 448 L462 408" stroke="#4c4040" strokeWidth="2" />
      </g>
      <circle cx="70" cy="1497" r="7" fill="#b58d5c" stroke="#87683f" strokeWidth="2" />
      <circle cx="300" cy="1556" r="7" fill="#aaa7ac" />
      <circle cx="1108" cy="38" r="4" fill="#949095" stroke="#a9a6ab" strokeWidth="3" />

      {trees.map(([x, y], i) => (
        <g key={i} stroke="#5d7558" strokeWidth="1" fill="none">
          <ellipse cx={x - 5} cy={y - 2} rx="4" ry="5" />
          <path d={`M${x - 5} ${y - 2}v10M${x + 5} ${y - 4}v12`} />
          <ellipse cx={x + 5} cy={y - 4} rx="4" ry="5" />
        </g>
      ))}
      {shrubs.map(([x, y], i) => (
        <path key={i} d={`M${x - 7} ${y}h14M${x} ${y}v-9M${x} ${y}l-4 -5M${x} ${y}l4 -5`} stroke="#6f7260" strokeWidth="1" />
      ))}
      {reeds.map(([x, y], i) => (
        <path key={i} d={`M${x - 6} ${y}l-2 -7M${x - 2} ${y}v-12M${x + 2} ${y}v-11M${x + 6} ${y}l2 -8M${x - 8} ${y}h16`} stroke="#4f7565" strokeWidth="2" fill="none" />
      ))}

      <g fontFamily="'Noto Sans', sans-serif" fontSize="18" fontWeight="500" fill="#2c2a2c" stroke="#a8a3a0" strokeWidth="1" style={{ paintOrder: "stroke" }}>
        {curvedLabels.map((l) => (
          <React.Fragment key={l.id}>
            <path id={`way-${l.id}`} d={l.d} fill="none" stroke="none" />
            <text fill={l.fill} fontSize={l.size}>
              <textPath href={`#way-${l.id}`}>{l.text}</textPath>
            </text>
          </React.Fragment>
        ))}
      </g>
      <g fontFamily="'Noto Sans', sans-serif" fontSize="19" fontStyle="italic" fontWeight="500" fill="#9e3238" stroke="#aea6a4" strokeWidth="3" style={{ paintOrder: "stroke" }}>
        {redLabels.map((l) => (
          <text key={l.text + l.y} x={l.x} y={l.y}>
            {l.text}
          </text>
        ))}
      </g>
      <g fontFamily="'Noto Sans', sans-serif" fontWeight="500" fill="#3f3e44" stroke="#a9a5a8" strokeWidth="3" style={{ paintOrder: "stroke" }}>
        <text x="0" y="385" fontSize="19">ointe-de-Rivière-</text>
        <text x="33" y="411" fontSize="19">du-Loup</text>
        <text x="678" y="304" fontSize="21">Parc</text>
        <text x="581" y="923" fontSize="29">Rivière-du-</text>
        <text x="622" y="963" fontSize="29">Loup</text>
        <text x="498" y="1153" fontSize="21">Saint-Patrice</text>
        <text x="679" y="1384" fontSize="21">Saint-</text>
      </g>

      <g fontFamily="'Noto Sans', sans-serif" fontSize="20" textAnchor="middle">
        <rect x="209" y="943" width="42" height="34" rx="2" fill="#b2959c" stroke="#a3606f" strokeWidth="2" />
        <text x="230" y="967" fill="#5e2f3c">20</text>
        <rect x="615" y="558" width="54" height="33" rx="2" fill="#b09a86" stroke="#a5804f" strokeWidth="2" />
        <text x="642" y="582" fill="#4b3a26">132</text>
      </g>

      {pins.map((p) => (
        <Pin key={`${p.x}-${p.y}`} {...p} />
      ))}
    </svg>
  );
}

function CrossIcon({ className }: { className: string }) {
  return (
    <svg viewBox="0 0 24 24" className={className} fill="currentColor" aria-hidden="true">
      <path d="M19 6.410 17.590 5 12 10.590 6.410 5 5 6.410 10.590 12 5 17.590 6.410 19 12 13.410 17.590 19 19 17.590 13.410 12z" />
    </svg>
  );
}

function SortArrow({ down = false }: { down?: boolean }) {
  return (
    <svg viewBox="0 0 24 24" className="size-6" fill="none" stroke="currentColor" strokeWidth="4" aria-hidden="true">
      {down ? <path d="M12 0v20M3 11.500l9 9 9-9" /> : <path d="M12 24V4M3 12.500l9-9 9 9" />}
    </svg>
  );
}

const sensors: [string, string][] = [
  ["4 saisons - MS - Amont", "132.5 psi"],
  ["4 saisons - MS - Aval", "79.0 psi"],
  ["Armand-Thériault / Tulipe - MS - Amont", "-10.0 psi"],
  ["Armand-Thériault / Tulipe - MS - Aval", "-15.5 psi"],
  ["Du Domaine / Beaubien - MS - Amont", "102.5 psi"],
  ["Du Domaine / Beaubien - MS - Aval", "61.5 psi"],
  ["Normandin - MS - Amont", "137.0 psi"],
  ["Normandin - MS - Aval", "79.0 psi"],
  ["Rue des Plateaux - MS - Amont", "137.0 psi"],
  ["Rue des Plateaux - MS - Aval", "59.5 psi"],
];

function SensorsPanel() {
  return (
    <section className="flex min-w-0 flex-col rounded-tl-lg bg-[#aeacaf]">
      <header className="flex h-[82px] items-center gap-7 pt-[14px] pl-[18px]">
        <svg viewBox="0 0 24 24" className="size-12 text-[#175d9c]" fill="currentColor" aria-hidden="true">
          <path d="M18 16.080c-.76 0-1.440.3-1.960.77L8.910 12.700c.05-.23.09-.46.09-.7s-.04-.47-.09-.7l7.050-4.110c.54.5 1.250.81 2.040.81 1.660 0 3-1.340 3-3s-1.340-3-3-3-3 1.340-3 3c0 .24.04.47.09.7L8.040 9.810C7.500 9.310 6.790 9 6 9c-1.660 0-3 1.340-3 3s1.340 3 3 3c.79 0 1.500-.31 2.040-.81l7.120 4.160c-.05.21-.08.43-.08.65 0 1.610 1.310 2.920 2.920 2.920s2.920-1.310 2.920-2.920-1.310-2.920-2.920-2.920z" />
        </svg>
        <h2 className="text-[32px] text-[#18171a]">Sensors</h2>
      </header>
      <div className="flex-1">
        <table className="w-full table-fixed border-separate border-spacing-0 text-left text-[26px] leading-10 text-[#18171a]">
          <colgroup>
            <col />
            <col className="w-[300px]" />
            <col className="w-[264px]" />
          </colgroup>
          <thead className="text-[28px] text-[#555357]">
            <tr className="h-[112px]">
              <th className="border-b-2 border-[#979599]" />
              <th className="border-b-2 border-[#979599] font-medium">
                <span className="flex items-center gap-3">
                  Name <SortArrow />
                </span>
              </th>
              <th className="border-b-2 border-[#979599] font-medium">Pressure</th>
            </tr>
          </thead>
          <tbody>
            {sensors.map(([name, value]) => (
              <tr key={name} className="h-[104px]">
                <td className="border-b-2 border-[#979599]" />
                <td className="border-b-2 border-[#979599] pr-6">{name}</td>
                <td className="border-b-2 border-[#979599]">{value}</td>
              </tr>
            ))}
          </tbody>
        </table>
      </div>
      <footer className="flex h-[122px] items-center justify-end overflow-hidden border-t-2 border-[#979599] pb-2 text-[24px] whitespace-nowrap text-[#555357]">
        <span className="-mr-3">Items per page:</span>
      </footer>
    </section>
  );
}

function AlarmsPanel() {
  return (
    <section className="bg-[#aeacaf] pt-[84px]">
      <table className="w-full table-fixed border-separate border-spacing-0 text-left text-[26px] leading-10 text-[#18171a]">
        <colgroup>
          <col className="w-[467px]" />
          <col className="w-[306px]" />
          <col className="w-[637px]" />
          <col className="w-[302px]" />
          <col className="w-[367px]" />
          <col />
        </colgroup>
        <thead className="text-[28px] text-[#555357]">
          <tr className="h-[112px]">
            <th className="border-b-2 border-[#979599] font-medium">
              <span className="-ml-3 flex items-center gap-3">
                e <SortArrow down />
              </span>
            </th>
            <th className="border-b-2 border-[#979599] font-medium">Name</th>
            <th className="border-b-2 border-[#979599]" />
            <th className="border-b-2 border-[#979599]" />
            <th className="border-b-2 border-[#979599]" />
            <th className="border-b-2 border-[#979599] font-medium">Status</th>
          </tr>
        </thead>
        <tbody>
          <tr className="h-[104px]">
            <td>11:51:23</td>
            <td className="pr-16">Armand-Thériault / Tulipe</td>
            <td>24E124454D219713B</td>
            <td>Pression anormale</td>
            <td className="font-bold text-[#a86a08]">Major</td>
            <td>Active Unacknowledged</td>
          </tr>
        </tbody>
      </table>
    </section>
  );
}

const fieldBox = "relative flex flex-col rounded-t-lg border-b-2 border-[#8e8c91] bg-[#f4f3fa] px-8 pt-4 pb-[14px]";
const labelText = "mb-1 text-[24px] leading-[28px] text-[#6b696e]";
const valueText = "h-12 w-full bg-transparent text-[32px] leading-[48px] text-[#1b1b1f] outline-none";

function TextField({ id, label, value, children }: { id: string; label: string; value: string; children?: React.ReactNode }) {
  return (
    <div className={fieldBox}>
      <label htmlFor={id} className={labelText}>{label}</label>
      <input id={id} type="text" defaultValue={value} className={valueText} />
      {children}
    </div>
  );
}

function SelectField({ id, label, value }: { id: string; label: string; value: string }) {
  return (
    <div className={fieldBox}>
      <label htmlFor={id} className={labelText}>{label}</label>
      <select id={id} defaultValue={value} className={`${valueText} appearance-none`}>
        <option>{value}</option>
      </select>
      <svg viewBox="0 0 20 10" className="pointer-events-none absolute top-[52px] right-8 h-[10px] w-5 fill-[#6b696e]" aria-hidden="true">
        <path d="M0 0h20L10 10z" />
      </svg>
    </div>
  );
}

function Toggle({ id, label }: { id: string; label: string }) {
  return (
    <label htmlFor={id} className="flex h-10 items-center gap-2 text-[28px] text-[#1b1b1f]">
      <input id={id} type="checkbox" role="switch" defaultChecked className="sr-only" />
      <span className="flex h-7 w-[72px] items-center justify-end rounded-full bg-[#93a3cf]">
        <span className="flex size-10 shrink-0 items-center justify-center rounded-full bg-[#213f75] shadow-md">
          <svg viewBox="0 0 24 24" className="size-9 fill-white" aria-hidden="true">
            <path d="M9 16.170 4.830 12l-1.420 1.410L9 19 21 7l-1.410-1.410z" />
          </svg>
        </span>
      </span>
      {label}
    </label>
  );
}

const description =
  "${deviceLabel} pressure level is abnormal:\n${currentValue}\nExpected range is between ${lowerThreshold} and\n${upperThreshold}.";

function AlarmDialog() {
  return (
    <div className="fixed inset-0 flex justify-center pt-[93px] pr-[2px] pb-[65px]">
      <div
        role="dialog"
        aria-labelledby="dialog-title"
        className="flex w-[1200px] flex-col overflow-hidden rounded-lg bg-[#fefefe] shadow-[0_22px_30px_-14px_rgba(0,0,0,0.2),0_48px_76px_6px_rgba(0,0,0,0.14),0_18px_92px_16px_rgba(0,0,0,0.12)]"
      >
        <header className="flex h-32 shrink-0 items-center justify-between bg-[#31579c] pr-10 pl-8 text-white">
          <h1 id="dialog-title" className="text-[40px] font-medium">Alarms Configuration: 4 saisons - MS - Amont</h1>
          <button type="button" aria-label="Close">
            <CrossIcon className="size-12" />
          </button>
        </header>

        <div className="relative min-h-0 flex-1 overflow-hidden pt-[54px] pr-[60px] pl-12">
          <section className="rounded-lg border-t-2 border-[#e4e3e6] shadow-[0_2px_4px_0_rgba(0,0,0,0.32)]">
            <button type="button" className="flex h-[96px] w-full items-center justify-between rounded-b-lg border-b-2 border-[#dddee0] pr-11 pb-1 pl-12 text-[32px] text-[#1b1b1f]">
              Abnormal pressure
              <svg viewBox="0 0 24 16" className="mb-3 h-4 w-6" fill="none" stroke="#757478" strokeWidth="4" aria-hidden="true">
                <path d="M2 14 12 4l10 10" />
              </svg>
            </button>
            <div className="flex items-center pt-[33px] pr-4 pb-12 pl-12">
              <form className="flex min-w-0 flex-1 flex-col">
                <div className="mb-[30px] flex flex-col gap-8">
                  <Toggle id="alarm-enabled" label="Alarm enabled" />
                  <Toggle id="alarm-clear" label="Clear alarm automatically" />
                </div>
                <div className="flex flex-col gap-11">
                  <TextField id="type" label="Type *" value="Abnormal pressure" />
                  <TextField id="parameter" label="Alarm parameter *" value="psi">
                    <button type="button" aria-label="Clear" className="absolute top-8 right-6 text-[#5d5c62]">
                      <CrossIcon className="size-12" />
                    </button>
                  </TextField>
                  <div className="grid grid-cols-2 gap-4">
                    <SelectField id="severity" label="Severity *" value="Major" />
                    <SelectField id="threshold-type" label="Threshold type *" value="Outside bounds" />
                  </div>
                  <div className="grid grid-cols-2 gap-4">
                    <TextField id="lower" label="Lower threshold *" value="115" />
                    <TextField id="upper" label="Upper threshold *" value="165" />
                  </div>
                  <div className={fieldBox}>
                    <label htmlFor="description" className={labelText}>Alarm Description</label>
                    <textarea id="description" rows={6} defaultValue={description} className="block w-full resize-none bg-transparent text-[32px] leading-[48px] text-[#1b1b1f] outline-none" />
                    <svg viewBox="0 0 16 16" className="absolute right-8 bottom-4 size-4" stroke="#55545a" strokeWidth="1.500" aria-hidden="true">
                      <path d="M1 15 14 1M8 15l6-7" />
                    </svg>
                  </div>
                  <p className="-mb-[2px] px-8 text-[24px] leading-10 text-[#6b696e]">
                    <svg viewBox="0 0 14 16" className="mr-2 inline h-4 w-[14px] align-baseline" fill="#5d5c62" aria-hidden="true">
                      <path d="M0 0l14 8-14 8z" />
                    </svg>
                    {"The following patterns could be used in the description: ${deviceName},"}
                    <br />
                    {"${deviceLabel}, ${currentValue}, ${upperThreshold}, ${lowerThreshold},"}
                    <br />
                    {"${latitude}, ${longitude}, ${position}, ${mapLink}"}
                  </p>
                  <div className="relative flex h-28 flex-col rounded-t-lg border-b-4 border-[#31579c] bg-[#e7e9f4] px-8 pt-4">
                    <label htmlFor="recipients" className="mb-1 text-[24px] leading-[28px] text-[#31579c]">Text message recipients</label>
                    <input id="recipients" type="tel" placeholder="Enter a phone number..." className="h-12 w-full bg-transparent text-[32px] leading-[48px] outline-none placeholder:text-[#65646c]" />
                    <span className="absolute top-[53px] left-8 h-[38px] w-[2px] bg-[#31579c]" />
                  </div>
                  <input type="email" aria-label="Email recipients" className="h-28 rounded-t-lg border-b-2 border-[#8e8c91] bg-[#f4f3fa] px-8" />
                  <input type="text" aria-label="Other recipients" className="h-28 rounded-t-lg border-b-2 border-[#8e8c91] bg-[#f4f3fa] px-8" />
                </div>
              </form>
              <div className="flex w-24 justify-center pt-1">
                <button type="button" aria-label="Remove alarm rule" className="text-[#31579c]">
                  <CrossIcon className="size-12" />
                </button>
              </div>
            </div>
          </section>
          <div className="absolute top-2 right-0 h-4/5 w-3 bg-[#d5d4d8]" />
        </div>

        <footer className="flex shrink-0 justify-end gap-4 pt-[19px] pr-14 pb-4 text-[28px] font-medium">
          <button type="button" className="h-[72px] px-5 text-[#31579c]">Cancel</button>
          <button type="button" className="h-[72px] w-32 rounded-lg bg-[#31579c] text-white shadow-md">Save</button>
        </footer>
      </div>
    </div>
  );
}

export default function App() {
  return (
    <div className="flex h-screen flex-col gap-[10px] overflow-hidden bg-[#a29fa3] font-['Roboto',sans-serif]">
      <div className="grid shrink-0 grid-cols-[1730fr_914fr] gap-[10px]">
        <section className="relative bg-[#aeacaf] pt-1 pr-2 pb-[9px]">
          <CityMap />
          <button type="button" aria-label="Full screen" className="absolute top-5 right-6 text-[#111]">
            <svg viewBox="0 0 24 24" className="size-12 p-1" fill="currentColor" aria-hidden="true">
              <path d="M7 14H5v5h5v-2H7v-3zm-2-4h2V7h3V5H5v5zm12 7h-3v2h5v-5h-2v3zM14 5v2h3v3h2V5h-5z" />
            </svg>
          </button>
        </section>
        <SensorsPanel />
      </div>
      <AlarmsPanel />
      <AlarmDialog />
    </div>
  );
}
